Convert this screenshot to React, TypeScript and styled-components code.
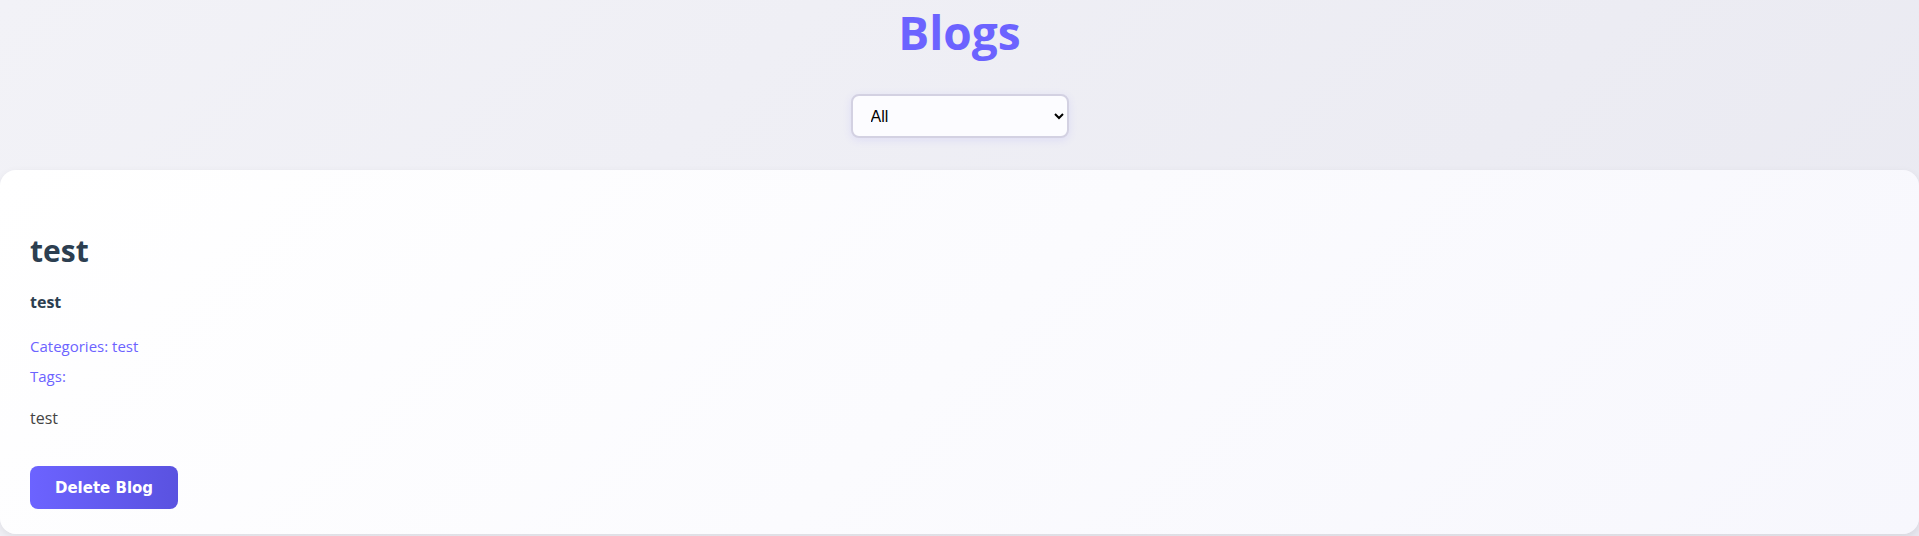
import React from "react";
import styled, { createGlobalStyle } from "styled-components";

const Global = createGlobalStyle`
  html, body { margin: 0; padding: 0; }
  body {
    font-family: "Open Sans", "Noto Sans", sans-serif;
    background: linear-gradient(135deg, #f2f2f7 0%, #e9e9f1 100%);
    min-height: 536px;
    overflow: hidden;
  }
`;

const Page = styled.div`
  display: flex;
  flex-direction: column;
  align-items: center;
`;

const Title = styled.h1`
  margin: 0;
  font-size: 46px;
  line-height: 64px;
  font-weight: 700;
  color: #6c63ff;
`;

const FilterRow = styled.div`
  margin-top: 30px;
  display: flex;
  justify-content: center;
`;

const Select = styled.select`
  width: 218px;
  height: 44px;
  padding: 0 10px 0 14px;
  border: 2px solid #d3d1e2;
  border-radius: 8px;
  background: #fcfcff;
  font-family: "Liberation Sans", Arial, sans-serif;
  font-size: 16px;
  color: #000;
  box-shadow: 0 2px 8px rgba(108, 99, 255, 0.12);
`;

const Card = styled.article`
  align-self: stretch;
  margin-top: 32px;
  padding: 30px 30px 25px;
  border-radius: 16px;
  background: linear-gradient(135deg, #ffffff 0%, #f7f7fd 100%);
  box-shadow: 0 3px 8px rgba(0, 0, 0, 0.08);
  display: flex;
  flex-direction: column;
  align-items: flex-start;
`;

const PostTitle = styled.h2`
  margin: 31px 0 0;
  font-size: 30px;
  line-height: 40px;
  font-weight: 700;
  color: #2c3e50;
`;

const Subtitle = styled.p`
  margin: 20px 0 0;
  font-size: 16px;
  line-height: 22px;
  font-weight: 700;
  color: #2c3e50;
`;

const Meta = styled.p<{ $first?: boolean }>`
  margin: ${(p) => (p.$first ? "21px" : "6px")} 0 0;
  font-size: 15px;
  line-height: 24px;
  font-weight: 500;
  color: #6c63ff;
`;

const Body = styled.p`
  margin: 18px 0 0;
  font-size: 16px;
  line-height: 24px;
  color: #444;
`;

const DeleteButton = styled.button`
  margin-top: 36px;
  width: 148px;
  height: 43px;
  border: none;
  border-radius: 8px;
  background: linear-gradient(90deg, #6c63ff 0%, #5a52e0 100%);
  color: #fff;
  font-family: "DejaVu Sans", Verdana, sans-serif;
  font-size: 15px;
  font-weight: 700;
  cursor: pointer;
`;

export default function App() {
  return (
    <>
      <Global />
      <Page>
        <Title>Blogs</Title>
        <FilterRow>
          <Select defaultValue="All">
            <option value="All">All</option>
            <option value="test">test</option>
          </Select>
        </FilterRow>
        <Card>
          <PostTitle>test</PostTitle>
          <Subtitle>test</Subtitle>
          <Meta $first>Categories: test</Meta>
          <Meta>Tags:</Meta>
          <Body>test</Body>
          <DeleteButton>Delete Blog</DeleteButton>
        </Card>
      </Page>
    </>
  );
}
